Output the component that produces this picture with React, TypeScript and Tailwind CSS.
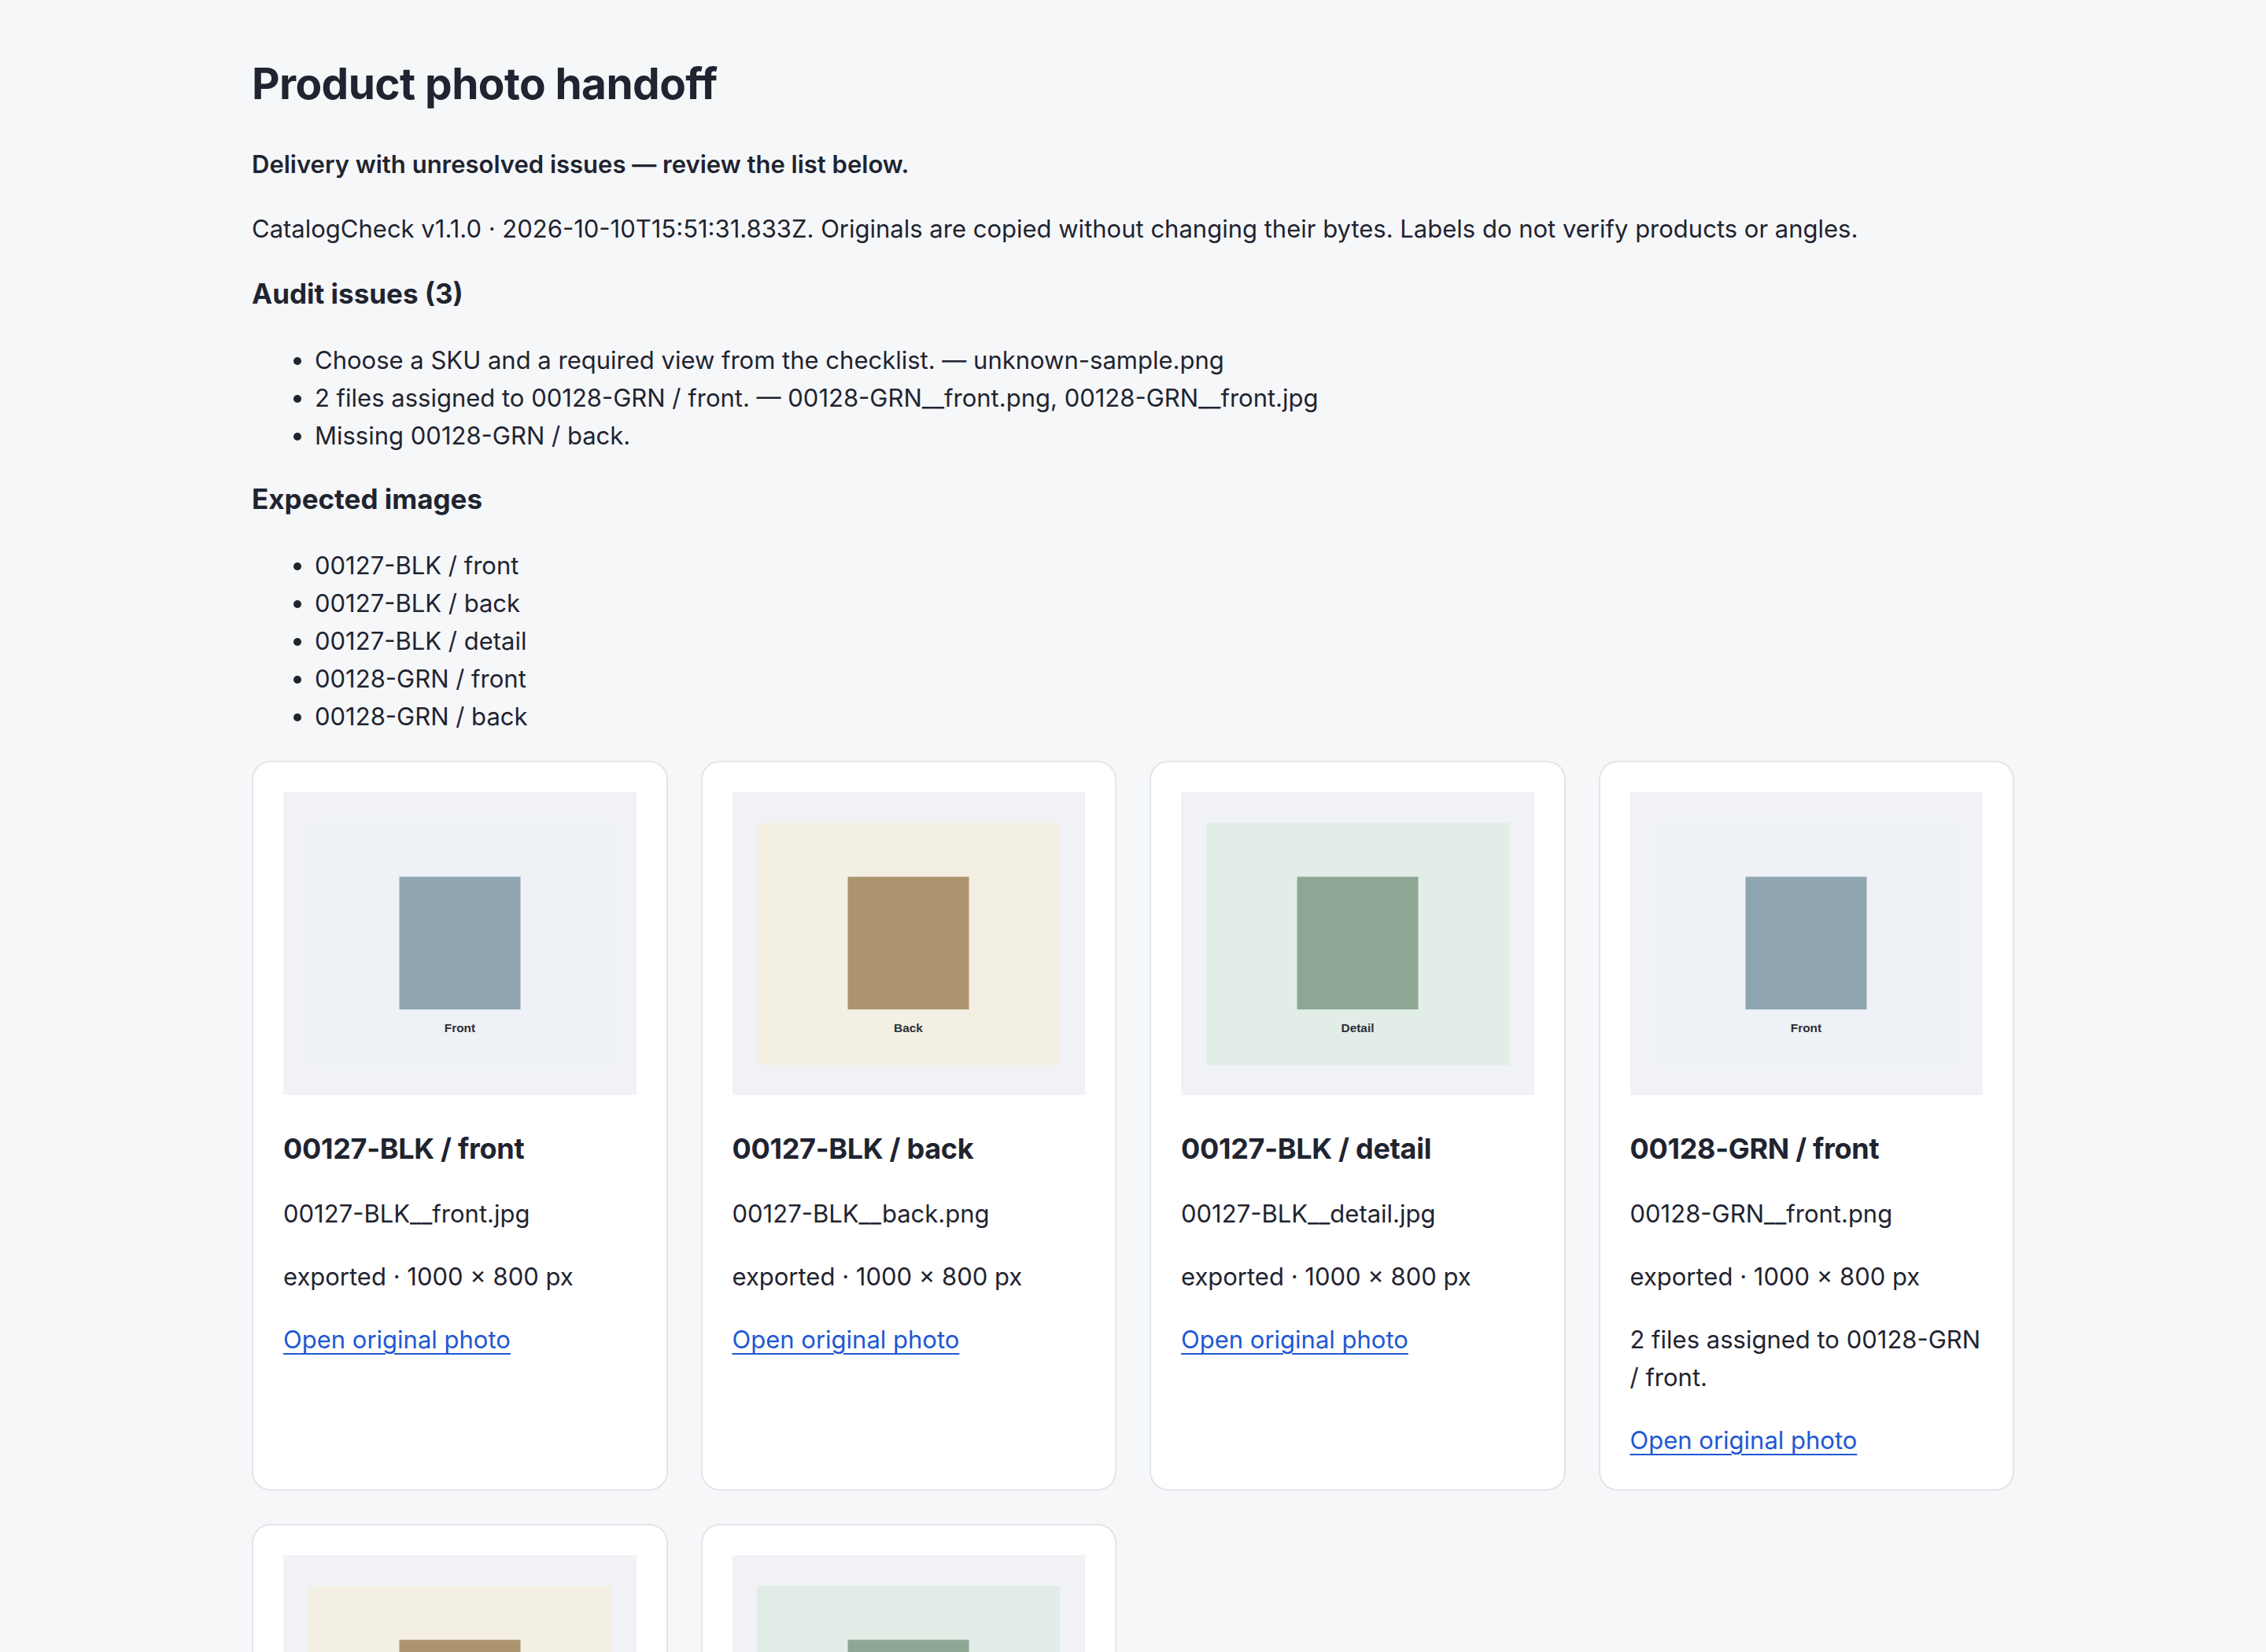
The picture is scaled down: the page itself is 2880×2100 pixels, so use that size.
import React from "react";

type Card = {
  title: string;
  file: string;
  meta: string;
  note?: string;
  pic: string;
  rect: string;
  label: string;
};

const cards: Card[] = [
  { title: "00127-BLK / front", file: "00127-BLK__front.jpg", meta: "exported · 1000 × 800 px", pic: "#eef1f5", rect: "#8fa6b2", label: "Front" },
  { title: "00127-BLK / back", file: "00127-BLK__back.png", meta: "exported · 1000 × 800 px", pic: "#f4efe3", rect: "#ac9470", label: "Back" },
  { title: "00127-BLK / detail", file: "00127-BLK__detail.jpg", meta: "exported · 1000 × 800 px", pic: "#e3ede7", rect: "#8ea795", label: "Detail" },
  { title: "00128-GRN / front", file: "00128-GRN__front.png", meta: "exported · 1000 × 800 px", note: "2 files assigned to 00128-GRN / front.", pic: "#eef1f5", rect: "#8fa6b2", label: "Front" },
  { title: "00128-GRN / front", file: "00128-GRN__front.jpg", meta: "exported · 1000 × 800 px", note: "2 files assigned to 00128-GRN / front.", pic: "#f4efe3", rect: "#ac9470", label: "Back" },
  { title: "Unassigned", file: "unknown-sample.png", meta: "exported · 1000 × 800 px", note: "Choose a SKU and a required view from the checklist.", pic: "#e3ede7", rect: "#8ea795", label: "Detail" },
];

function Photo({ c }: { c: Card }) {
  return (
    <div className="flex h-[385px] w-full items-center justify-center bg-[#f0f2f5]">
      <svg width="385" height="308" viewBox="0 0 1000 800">
        <rect x="0" y="0" width="1000" height="800" fill={c.pic} />
        <rect x="300" y="178" width="400" height="438" fill={c.rect} />
        <text
          x="500"
          y="692"
          textAnchor="middle"
          fontSize="40"
          fontWeight="700"
          fontFamily="'Liberation Sans', Arial, sans-serif"
          fill="#2a2f36"
        >
          {c.label}
        </text>
      </svg>
    </div>
  );
}

function PhotoCard({ c }: { c: Card }) {
  return (
    <div className="flex flex-col rounded-[24px] border-2 border-[#e2e5e9] bg-white p-[38px]">
      <Photo c={c} />
      <h3 className="mt-[41px] text-[36px] font-bold leading-[54px] tracking-[-0.3px]">{c.title}</h3>
      <p className="mt-[32px] text-[31px] leading-[48px]">{c.file}</p>
      <p className="mt-[32px] text-[31px] leading-[48px]">{c.meta}</p>
      {c.note && <p className="mt-[32px] text-[31px] leading-[48px]">{c.note}</p>}
      <a href="#" className="mt-[32px] text-[31px] leading-[48px] text-[#2158d3] underline decoration-2 underline-offset-[6px]">
        Open original photo
      </a>
    </div>
  );
}

export default function App() {
  return (
    <div className="min-h-screen bg-[#f6f7f9] font-['Inter','Noto_Sans',sans-serif] text-[#1f2430]">
      <main className="mx-auto w-[2240px] pt-[72px] pb-[80px]">
        <h1 className="text-[55px] font-bold leading-[68px] tracking-[-0.6px]">Product photo handoff</h1>
        <p className="mt-[45px] text-[31px] font-semibold leading-[48px]">
          Delivery with unresolved issues — review the list below.
        </p>
        <p className="mt-[34px] text-[31px] leading-[48px]">
          CatalogCheck v1.1.0 · 2026-10-10T15:51:31.833Z. Originals are copied without changing their bytes. Labels do not verify products or angles.
        </p>
        <h2 className="mt-[31px] text-[35px] font-bold leading-[54px]">Audit issues (3)</h2>
        <ul className="mt-[34px] list-disc pl-[80px] text-[31px] leading-[48px]">
          <li>Choose a SKU and a required view from the checklist. — unknown-sample.png</li>
          <li>2 files assigned to 00128-GRN / front. — 00128-GRN__front.png, 00128-GRN__front.jpg</li>
          <li>Missing 00128-GRN / back.</li>
        </ul>
        <h2 className="mt-[29px] text-[35px] font-bold leading-[54px]">Expected images</h2>
        <ul className="mt-[34px] list-disc pl-[80px] text-[31px] leading-[48px]">
          <li>00127-BLK / front</li>
          <li>00127-BLK / back</li>
          <li>00127-BLK / detail</li>
          <li>00128-GRN / front</li>
          <li>00128-GRN / back</li>
        </ul>
        <div className="mt-[32px] grid grid-cols-4 gap-[42px]">
          {cards.map((c, i) => (
            <PhotoCard key={i} c={c} />
          ))}
        </div>
      </main>
    </div>
  );
}
